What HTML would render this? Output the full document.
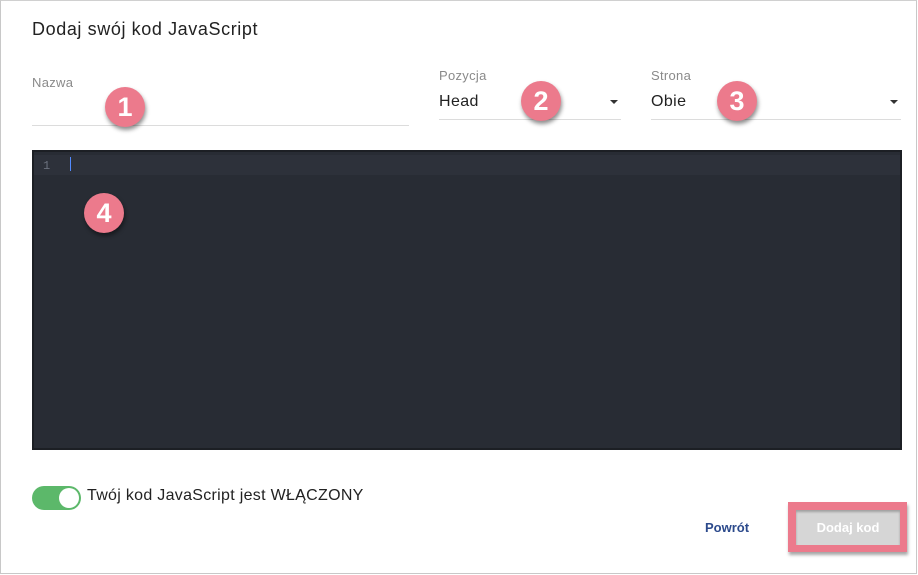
<!DOCTYPE html>
<html><head><meta charset="utf-8"><style>
*{box-sizing:border-box;margin:0;padding:0}
body{width:918px;height:575px;background:#fff;font-family:"Liberation Sans",sans-serif;position:relative;overflow:hidden}
.frame{position:absolute;left:0;top:0;width:917px;height:574px;border:1px solid #c8c8c8;border-top-color:#d0d0d0}
.abs{position:absolute}
.title{left:32px;top:19px;font-size:18px;letter-spacing:0.6px;color:#222}
.lbl{font-size:13px;color:#8a8a8a;letter-spacing:0.3px}
.val{font-size:16px;color:#222;letter-spacing:0.4px}
.line{height:1px;background:#dcdcdc}
.caret{width:0;height:0;border-left:4px solid transparent;border-right:4px solid transparent;border-top:4px solid #333}
.badge{width:40px;height:40px;border-radius:50%;background:#ec7a8c;color:#fff;font-size:27px;font-weight:bold;text-align:center;line-height:40px;box-shadow:1px 3px 4px rgba(0,0,0,.45)}
.editor{left:32px;top:150px;width:870px;height:300px;background:#282c34;border:2px solid #1c1f24}
</style></head><body>
<div class="frame"></div>
<div class="abs title">Dodaj swój kod JavaScript</div>

<div class="abs lbl" style="left:32px;top:75px">Nazwa</div>
<div class="abs line" style="left:32px;top:125px;width:377px"></div>

<div class="abs lbl" style="left:439px;top:68px">Pozycja</div>
<div class="abs val" style="left:439px;top:93px">Head</div>
<div class="abs caret" style="left:610px;top:100px"></div>
<div class="abs line" style="left:439px;top:119px;width:182px"></div>

<div class="abs lbl" style="left:651px;top:68px">Strona</div>
<div class="abs val" style="left:651px;top:93px">Obie</div>
<div class="abs caret" style="left:890px;top:100px"></div>
<div class="abs line" style="left:651px;top:119px;width:250px"></div>

<div class="abs editor">
  <div class="abs" style="left:0;top:3px;width:866px;height:20px;background:#2d313a"></div>
  <div class="abs" style="left:9px;top:7px;font-family:'Liberation Mono',monospace;font-size:12px;color:#6b717d">1</div>
  <div class="abs" style="left:36px;top:5px;width:1px;height:14px;background:#528bff"></div>
</div>

<div class="abs badge" style="left:105px;top:87px">1</div>
<div class="abs badge" style="left:521px;top:81px">2</div>
<div class="abs badge" style="left:717px;top:81px">3</div>
<div class="abs badge" style="left:84px;top:193px">4</div>

<div class="abs" style="left:32px;top:486px;width:49px;height:24px;border-radius:12px;background:#5cb86a"></div>
<div class="abs" style="left:59px;top:488px;width:20px;height:20px;border-radius:50%;background:#fff"></div>
<div class="abs" style="left:87px;top:487px;font-size:16px;letter-spacing:0.3px;color:#222">Twój kod JavaScript jest WŁĄCZONY</div>

<div class="abs" style="left:705px;top:520px;font-size:13px;font-weight:bold;color:#2c4a8c">Powrót</div>
<div class="abs" style="left:788px;top:502px;width:119px;height:50px;background:#ec7a8c;box-shadow:1px 3px 3px rgba(0,0,0,.35)"></div>
<div class="abs" style="left:796px;top:510px;width:104px;height:35px;background:#d6d6d6;box-shadow:inset 0 2px 2px rgba(0,0,0,.25);color:#fff;font-size:13px;font-weight:bold;text-align:center;line-height:35px">Dodaj kod</div>
</body></html>
